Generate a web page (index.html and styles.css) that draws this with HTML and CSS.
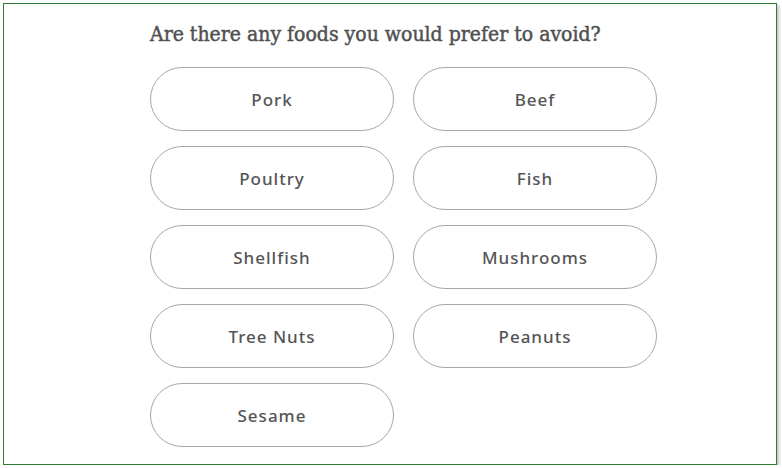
FILE: index.html
```html
<!DOCTYPE html>
<html>
<head>
<meta charset="utf-8">
<link rel="stylesheet" href="styles.css">
</head>
<body>
<div class="frame">
  <div class="content">
    <h1 class="question">Are there any foods you would prefer to avoid?</h1>
    <div class="options">
      <button class="option">Pork</button>
      <button class="option">Beef</button>
      <button class="option">Poultry</button>
      <button class="option">Fish</button>
      <button class="option">Shellfish</button>
      <button class="option">Mushrooms</button>
      <button class="option">Tree Nuts</button>
      <button class="option">Peanuts</button>
      <button class="option">Sesame</button>
    </div>
  </div>
</div>
</body>
</html>
```

FILE: styles.css
```css
html, body {
  margin: 0;
  padding: 0;
  background: #ffffff;
}
.frame {
  margin: 3px 0 0 3px;
  width: 772px;
  height: 460px;
  border: 1px solid #2e7d32;
  box-shadow: 2px 2px 3px rgba(0,0,0,0.25);
  box-sizing: content-box;
}
.content {
  padding: 16px 0 0 146px;
}
.question {
  margin: 0;
  font-family: "DejaVu Serif", serif;
  font-stretch: condensed;
  font-weight: normal;
  font-size: 21px;
  line-height: 28px;
  color: #505050;
  -webkit-text-stroke: 0.45px #505050;
  letter-spacing: 0;
}
.options {
  margin-top: 19px;
  display: grid;
  grid-template-columns: 244px 244px;
  column-gap: 19px;
  row-gap: 15px;
}
.option {
  height: 64px;
  border: 1px solid #a8a8a8;
  border-radius: 32px;
  background: #ffffff;
  font-family: "Noto Sans", sans-serif;
  font-size: 17px;
  font-weight: 500;
  letter-spacing: 1px;
  color: #555555;
  padding: 0;
}
```
